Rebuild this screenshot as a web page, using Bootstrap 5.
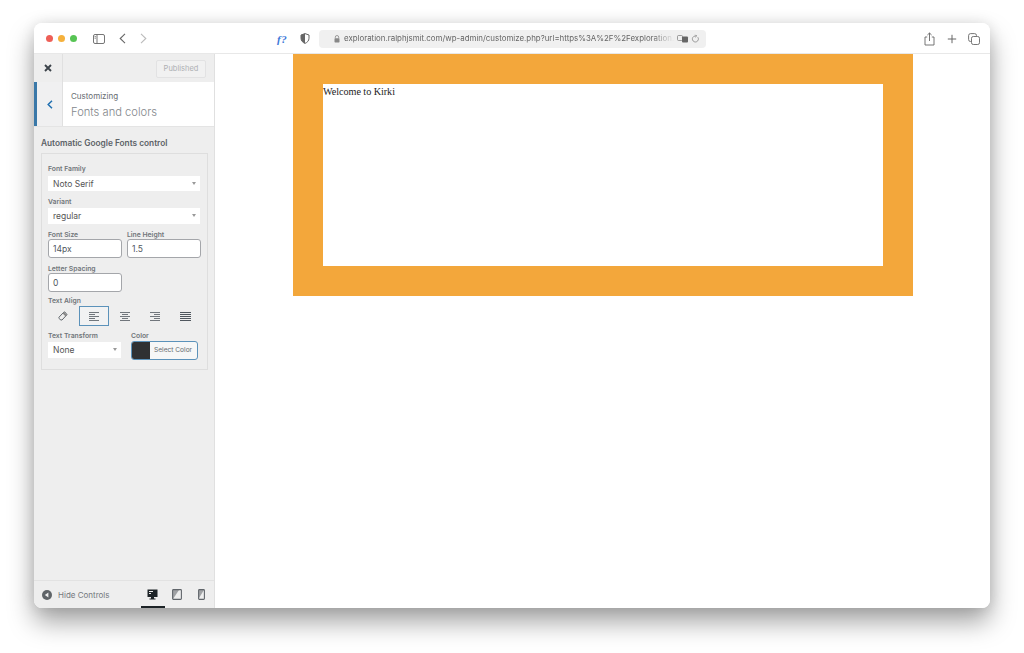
<!DOCTYPE html>
<html lang="en">
<head>
<meta charset="utf-8">
<title>Customizing</title>
<link href="https://cdn.jsdelivr.net/npm/bootstrap@5.3.0/dist/css/bootstrap.min.css" rel="stylesheet">
<style>
html,body{height:653px;overflow:hidden;background:#fff}
body{padding:23px 34px 45px;font-family:Inter,"Liberation Sans",sans-serif;color:#50575e}
.win{width:956px;height:585px;border-radius:8px;background:#fff;box-shadow:0 14px 26px rgba(0,0,0,.36),0 0 14px rgba(0,0,0,.1);overflow:hidden}
.bar{height:31px;background:#fff;border-bottom:1px solid #e8e8e8;padding:1px 0 0 12px}
.dots{gap:5px}
.dot{width:7px;height:7px;border-radius:50%}
.sidetog{margin-left:16px}
.navb{margin-left:14px}
.fq{font:italic 700 11px "Liberation Serif",serif;color:#3b78d8;margin-left:130px;width:28px;letter-spacing:.5px}
.shield{margin-left:-5px}
.url{width:387px;height:18px;margin-left:9px;background:#f0f0f0;border-radius:4px;padding-left:15px;font-size:7.9px;color:#666;white-space:nowrap}
.url span{width:331px;display:block;-webkit-mask-image:linear-gradient(to right,#000 93%,transparent)}
.ur1{margin-left:2px}
.rgt{margin-left:218px}
.rg2{margin-left:12px}
.rg3{margin-left:11px}
.main{height:554px}
.side{width:181px;background:#eee;border-right:1px solid #e0e0e0;font-size:7px}
.shead{height:28px;background:#eee}
.xbtn{width:29px;height:28px;border-right:1px solid #e0e0e0;color:#3c434a}
.pub{width:50px;height:18px;margin:2px 0 0 93px;border:1px solid #e2e2e3;border-radius:2px;background:#f1f1f1;color:#aeb0b3;font-size:7.5px;line-height:16px;text-align:center}
.stitle{height:45px;background:#fff;border-bottom:1px solid #e4e4e4}
.bk{width:29px;background:#f0f0f1;border-left:3px solid #3a78a8;border-right:1px solid #e0e0e0}
.sttxt{padding:8px 0 0 8px}
.sttxt .a{font-size:8px;line-height:12px;color:#666b70}
.sttxt .b{font-size:11.2px;line-height:20px;color:#83878b;font-weight:300}
.sbody{padding:10px 7px 0}
.h3x{font-size:8.3px;font-weight:600;color:#5c6267;line-height:12px;margin-bottom:4px}
.box{width:167px;height:217px;border:1px solid #dedede;padding:10px 6px 0}
.lbl{font-size:6.8px;font-weight:600;line-height:9px;color:#70757a;display:block}
.sel{background:#fff;height:16px;font-size:8.5px;line-height:16px;padding-left:5px;color:#555;position:relative;width:152px}
.sel::after{content:"";position:absolute;right:4px;top:6px;border:2.5px solid transparent;border-top:3.5px solid #999;border-bottom:0}
.s1{height:15px;line-height:17px;margin:3px 0 6px}
.s2{margin:2px 0 6px}
.s3{width:73px;margin-top:2px}
.fld{height:19px;width:74px;background:#fff;border:1px solid #a4a6aa;border-radius:3px;font-size:8.5px;line-height:18px;padding-left:4px;color:#50575e}
.fld2{margin-bottom:6px}
.fld3{margin-bottom:4px}
.gapf{margin-left:5px}
.aln{height:20px;margin:1px 0 5px}
.albtn{width:31px;height:20px;color:#50575e}
.albtn.on{border:1px solid #5b92ba;background:#f1f2f3}
.ctf{width:74px}
.lbc{margin-left:9px}
.colr{width:67px;height:19px;border:1px solid #5b92ba;border-radius:3px;background:#f6f7f7;margin:1px 0 0 9px;overflow:hidden}
.sw{width:18px;background:#2f3133}
.colr span{font-size:6.6px;line-height:17px;padding-left:4px;color:#666b70;white-space:nowrap}
.sfoot{height:28px;border-top:1px solid #e2e2e2;background:#eee}
.hide{margin-left:8px;font-size:8px;color:#74787d;width:105px}
.hide svg{margin-right:6px}
.dv{position:relative;width:26px;height:27px}
.dv.on::after{content:"";position:absolute;left:0;right:0;bottom:0;height:2px;background:#1d2327}
.prev{background:#fff;padding-left:78px}
.org{width:620px;height:242px;background:#f3a73b;padding:30px}
.inn{height:182px;background:#fff;font:10.2px/15px "Liberation Serif",serif;letter-spacing:-.05px;color:#222}
</style>
</head>
<body>
<div class="win d-flex flex-column">
  <div class="bar d-flex align-items-center">
    <div class="d-flex dots">
      <div class="dot" style="background:#ee5f57"></div><div class="dot" style="background:#f5b13c"></div><div class="dot" style="background:#57c454"></div>
    </div>
    <svg class="sidetog" width="12" height="10" viewBox="0 0 12 10" fill="none" stroke="#666" stroke-width=".9"><rect x=".5" y=".5" width="11" height="9" rx="1.5"/><path d="M4 .5v9M1.6 2.6h1.2M1.6 4.2h1.2"/></svg>
    <svg class="navb" width="7" height="11" viewBox="0 0 7 11" fill="none" stroke="#666" stroke-width="1.1"><path d="M6 .8 1.2 5.5 6 10.2"/></svg>
    <svg class="navb" width="7" height="11" viewBox="0 0 7 11" fill="none" stroke="#bbb" stroke-width="1.1"><path d="M1 .8 5.8 5.5 1 10.2"/></svg>
    <div class="fq">f?</div>
    <svg class="shield" width="10" height="11" viewBox="0 0 10 11"><path d="M5 .6 9 2v3.2c0 2.6-1.8 4.3-4 5.2-2.2-.9-4-2.6-4-5.2V2z" fill="#fff" stroke="#666"/><path d="M5 .6 1 2v3.2c0 2.6 1.8 4.3 4 5.2z" fill="#666"/></svg>
    <div class="url d-flex align-items-center">
      <svg width="6" height="8" viewBox="0 0 6 8" class="flex-shrink-0 me-1"><path d="M1.3 3.4V2.2a1.7 1.7 0 0 1 3.4 0v1.2" fill="none" stroke="#888" stroke-width=".8"/><rect x=".5" y="3.3" width="5" height="4.2" rx=".7" fill="#888"/></svg>
      <span>exploration.ralphjsmit.com/wp-admin/customize.php?url=https%3A%2F%2Fexploration.r</span>
      <svg width="12" height="8" viewBox="0 0 12 8" class="flex-shrink-0 ur1"><rect x=".5" y=".5" width="5" height="5" rx="1" fill="none" stroke="#777" stroke-width=".7"/><rect x="5" y="1.5" width="6" height="6" rx="1" fill="#666"/></svg>
      <svg width="8" height="9" viewBox="0 0 8 9" class="flex-shrink-0 ur1" fill="none" stroke="#777" stroke-width=".7"><path d="M6.8 3.2A3 3 0 1 1 4 2H5.5M4.4.8 5.6 2 4.4 3.2"/></svg>
    </div>
    <div class="rgt d-flex align-items-center">
      <svg width="11" height="14" viewBox="0 0 11 14" fill="none" stroke="#666" stroke-width=".9"><path d="M3.2 5H1v8h9V5H7.8M5.5 9V1M3.4 3l2.1-2 2.1 2"/></svg>
      <svg class="rg2" width="10" height="10" viewBox="0 0 10 10" fill="none" stroke="#666" stroke-width="1"><path d="M5 .8v8.4M.8 5h8.4"/></svg>
      <svg class="rg3" width="12" height="12" viewBox="0 0 12 12" fill="none" stroke="#666" stroke-width=".9"><rect x="3.5" y="3.5" width="8" height="8" rx="1.8"/><path d="M2.8 8.5A2 2 0 0 1 .6 6.5V2.6a2 2 0 0 1 2-2h3.9a2 2 0 0 1 2 2.2"/></svg>
    </div>
  </div>
  <div class="main d-flex">
    <div class="side d-flex flex-column flex-shrink-0">
      <div class="shead d-flex align-items-center">
        <div class="xbtn d-flex align-items-center justify-content-center flex-shrink-0"><svg width="8" height="8" viewBox="0 0 8 8" stroke="#3c434a" stroke-width="1.9"><path d="M1 1l6 6M7 1 1 7"/></svg></div>
        <div class="pub">Published</div>
      </div>
      <div class="stitle d-flex">
        <div class="bk d-flex align-items-center justify-content-center flex-shrink-0"><svg width="6" height="9" viewBox="0 0 6 9" fill="none" stroke="#2271b1" stroke-width="1.5"><path d="M5 .8 1.2 4.5 5 8.2"/></svg></div>
        <div class="sttxt"><div class="a">Customizing</div><div class="b">Fonts and colors</div></div>
      </div>
      <div class="sbody flex-grow-1">
        <div class="h3x">Automatic Google Fonts control</div>
        <div class="box">
          <span class="lbl">Font Family</span>
          <div class="sel s1">Noto Serif</div>
          <span class="lbl">Variant</span>
          <div class="sel s2">regular</div>
          <div class="d-flex fld2">
            <div><span class="lbl">Font Size</span><div class="fld">14px</div></div>
            <div class="gapf"><span class="lbl">Line Height</span><div class="fld">1.5</div></div>
          </div>
          <span class="lbl">Letter Spacing</span>
          <div class="fld fld3">0</div>
          <span class="lbl">Text Align</span>
          <div class="aln d-flex">
            <div class="albtn d-flex align-items-center justify-content-center"><svg width="10" height="10" viewBox="0 0 10 10" fill="none" stroke="#50575e" stroke-width=".9"><path d="M1.2 6 5.8 1.2a.8.8 0 0 1 1.1 0l1.8 1.7a.8.8 0 0 1 0 1.1L4 9H2.6L1.2 7.4a1 1 0 0 1 0-1.4z"/><path d="M4.6 2.6 7.6 5.4 9 4 6.3 1z" fill="#888" stroke="none"/></svg></div>
            <div class="albtn on d-flex align-items-center justify-content-center"><svg width="10" height="9" viewBox="0 0 10 9" stroke="#50575e"><path d="M0 .5h10M0 2.5h6M0 4.5h10M0 6.5h6M0 8.5h10" stroke-width=".8"/></svg></div>
            <div class="albtn d-flex align-items-center justify-content-center"><svg width="10" height="9" viewBox="0 0 10 9" stroke="#50575e"><path d="M0 .5h10M2 2.5h6M0 4.5h10M2 6.5h6M0 8.5h10" stroke-width=".8"/></svg></div>
            <div class="albtn d-flex align-items-center justify-content-center"><svg width="10" height="9" viewBox="0 0 10 9" stroke="#50575e"><path d="M0 .5h10M4 2.5h6M0 4.5h10M4 6.5h6M0 8.5h10" stroke-width=".8"/></svg></div>
            <div class="albtn d-flex align-items-center justify-content-center"><svg width="11" height="9" viewBox="0 0 11 9" stroke="#50575e"><path d="M0 .5h11M0 2.5h11M0 4.5h11M0 6.5h11M0 8.5h11" stroke-width="1"/></svg></div>
          </div>
          <div class="d-flex">
            <div class="ctf"><span class="lbl">Text Transform</span><div class="sel s3">None</div></div>
            <div><span class="lbl lbc">Color</span><div class="colr d-flex"><div class="sw"></div><span>Select Color</span></div></div>
          </div>
        </div>
      </div>
      <div class="sfoot d-flex align-items-center">
        <div class="hide d-flex align-items-center"><svg width="10" height="10" viewBox="0 0 10 10"><circle cx="5" cy="5" r="5" fill="#5f6468"/><path d="M6.4 2.4v5.2L2.8 5z" fill="#eee"/></svg>Hide Controls</div>
        <div class="dv on d-flex align-items-center justify-content-center"><svg width="11" height="11" viewBox="0 0 11 11"><path d="M.5.5h10v7.5h-10z" fill="#1d2327"/><path d="M2 2h4v1H2zM2 4h2v1H2z" fill="#eee"/><path d="M4 8h3v1.5h1.5v1h-6v-1H4z" fill="#1d2327"/></svg></div>
        <div class="dv d-flex align-items-center justify-content-center"><svg width="10" height="11" viewBox="0 0 10 11"><rect x=".6" y=".6" width="8.8" height="9.8" rx=".8" fill="none" stroke="#60656a" stroke-width="1.1"/><path d="M1 10 1 1 7 1z" fill="#60656a" opacity=".55"/></svg></div>
        <div class="dv d-flex align-items-center justify-content-center"><svg width="7" height="11" viewBox="0 0 7 11"><rect x=".6" y=".6" width="5.8" height="9.8" rx=".8" fill="none" stroke="#60656a" stroke-width="1.1"/><path d="M1 9 1 1 6 1z" fill="#60656a" opacity=".55"/></svg></div>
      </div>
    </div>
    <div class="prev flex-grow-1">
      <div class="org"><div class="inn">Welcome to Kirki</div></div>
    </div>
  </div>
</div>
<script src="https://cdn.jsdelivr.net/npm/bootstrap@5.3.0/dist/js/bootstrap.bundle.min.js"></script>
</body>
</html>
